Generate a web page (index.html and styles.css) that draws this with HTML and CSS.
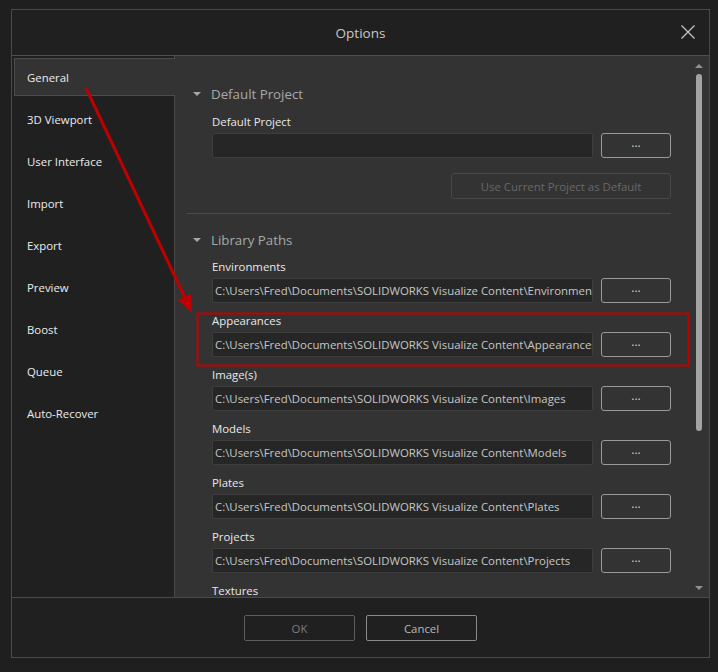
FILE: index.html
```html
<!DOCTYPE html>
<html lang="en">
<head>
    <meta charset="UTF-8">
    <title>Options</title>
    <link rel="stylesheet" href="styles.css">
</head>
<body>
<div class="dialog">
    <div class="titlebar">
        <div class="title">Options</div>
        <svg class="close" width="14" height="14" viewBox="0 0 14 14">
            <path d="M0.5 0.5 L13.5 13.5 M13.5 0.5 L0.5 13.5" stroke="#c8c8c8" stroke-width="1.2" fill="none"/>
        </svg>
    </div>

    <div class="main">
        <ul class="nav">
            <li class="active">General</li>
            <li>3D Viewport</li>
            <li>User Interface</li>
            <li>Import</li>
            <li>Export</li>
            <li>Preview</li>
            <li>Boost</li>
            <li>Queue</li>
            <li>Auto-Recover</li>
        </ul>

        <div class="content">
            <div class="scroller">
                <div class="section-head"><span class="caret"></span>Default Project</div>
                <div class="field">
                    <div class="label">Default Project</div>
                    <div class="row">
                        <div class="path"></div>
                        <button class="browse">...</button>
                    </div>
                </div>
                <div class="row-end">
                    <button class="wide" disabled>Use Current Project as Default</button>
                </div>

                <div class="divider"></div>

                <div class="section-head library"><span class="caret"></span>Library Paths</div>
                <div class="field">
                    <div class="label">Environments</div>
                    <div class="row">
                        <div class="path">C:\Users\Fred\Documents\SOLIDWORKS Visualize Content\Environments</div>
                        <button class="browse">...</button>
                    </div>
                </div>
                <div class="field">
                    <div class="label">Appearances</div>
                    <div class="row">
                        <div class="path">C:\Users\Fred\Documents\SOLIDWORKS Visualize Content\Appearances</div>
                        <button class="browse">...</button>
                    </div>
                </div>
                <div class="field">
                    <div class="label">Image(s)</div>
                    <div class="row">
                        <div class="path">C:\Users\Fred\Documents\SOLIDWORKS Visualize Content\Images</div>
                        <button class="browse">...</button>
                    </div>
                </div>
                <div class="field">
                    <div class="label">Models</div>
                    <div class="row">
                        <div class="path">C:\Users\Fred\Documents\SOLIDWORKS Visualize Content\Models</div>
                        <button class="browse">...</button>
                    </div>
                </div>
                <div class="field">
                    <div class="label">Plates</div>
                    <div class="row">
                        <div class="path">C:\Users\Fred\Documents\SOLIDWORKS Visualize Content\Plates</div>
                        <button class="browse">...</button>
                    </div>
                </div>
                <div class="field">
                    <div class="label">Projects</div>
                    <div class="row">
                        <div class="path">C:\Users\Fred\Documents\SOLIDWORKS Visualize Content\Projects</div>
                        <button class="browse">...</button>
                    </div>
                </div>
                <div class="field">
                    <div class="label">Textures</div>
                </div>
            </div>

            <div class="scrollbar">
                <span class="arrow-up"></span>
                <div class="thumb"></div>
                <span class="arrow-down"></span>
            </div>
        </div>
    </div>

    <div class="footer">
        <button class="btn btn-disabled">OK</button>
        <button class="btn">Cancel</button>
    </div>
</div>

<!-- annotation drawn over the screenshot -->
<svg class="annotations" width="718" height="672" viewBox="0 0 718 672">
    <line x1="86" y1="88" x2="185" y2="298" stroke="#c00000" stroke-width="3"/>
    <polygon points="192,313 178,300 191,294" fill="#c00000"/>
    <rect x="197.5" y="313.5" width="491" height="52" fill="none" stroke="#c00000" stroke-width="2"/>
</svg>
</body>
</html>
```

FILE: styles.css
```css
* {
    box-sizing: border-box;
}

body {
    margin: 0;
    padding: 9px 0 0 11px;
    background-color: #1f1f1f;
    font-family: 'Open Sans', 'Noto Sans', sans-serif;
    font-size: 11.4px;
    color: #e6e6e6;
    height: 672px;
    overflow: hidden;
    position: relative;
}

.dialog {
    width: 699px;
    height: 649px;
    border: 1px solid #4a4a4a;
    display: flex;
    flex-direction: column;
    background-color: #202020;
}

.titlebar {
    height: 46px;
    flex: none;
    border-bottom: 1px solid #505050;
    display: flex;
    align-items: center;
    justify-content: center;
    position: relative;
}

.title {
    font-size: 13.5px;
    color: #c8c8c8;
}

.close {
    position: absolute;
    right: 14px;
    top: 15px;
}

.main {
    flex: 1;
    display: flex;
    min-height: 0;
}

/* Menu lateral */
.nav {
    list-style: none;
    margin: 0;
    padding: 2px 0 0 2px;
    width: 163px;
    flex: none;
    border-right: 1px solid #484848;
}

.nav li {
    height: 38px;
    line-height: 38px;
    margin-bottom: 4px;
    padding-left: 12px;
    border: 1px solid transparent;
    color: #ececec;
}

.nav li.active {
    background-color: #333333;
    border-color: #4c4c4c;
    border-right: none;
    margin-right: -1px;
    position: relative;
}

.content {
    flex: 1;
    display: flex;
    background-color: #333333;
    min-width: 0;
}

.scroller {
    flex: 1;
    overflow: hidden;
    padding: 28px 0 0 37px;
}

.section-head {
    height: 20px;
    line-height: 20px;
    font-size: 13.3px;
    color: #a9a9a9;
    margin-left: -19px;
    display: flex;
    align-items: center;
}

.caret {
    width: 0;
    height: 0;
    border-left: 4px solid transparent;
    border-right: 4px solid transparent;
    border-top: 4px solid #a8a8a8;
    margin-right: 10px;
}

.section-head + .field {
    margin-top: 9px;
}

.section-head.library + .field {
    margin-top: 8px;
}

.field {
    width: 459px;
    margin-bottom: 9px;
}

.label {
    height: 17px;
    line-height: 17px;
    margin-bottom: 3px;
    color: #e8e8e8;
}

.row {
    display: flex;
    gap: 8px;
}

.path {
    width: 381px;
    height: 25px;
    line-height: 23px;
    padding-left: 2px;
    background-color: #262626;
    border: 1px solid #3e3e3e;
    border-radius: 2px;
    color: #c6c6c6;
    white-space: nowrap;
    overflow: hidden;
}

button {
    font-family: inherit;
    background: transparent;
    cursor: pointer;
}

.browse {
    width: 70px;
    height: 25px;
    border: 1px solid #9a9a9a;
    border-radius: 3px;
    color: #cfcfcf;
    font-size: 12px;
    line-height: 16px;
    padding: 0 0 6px;
}

.row-end {
    width: 459px;
    display: flex;
    justify-content: flex-end;
    margin-top: 15px;
}

.wide {
    width: 220px;
    height: 26px;
    border: 1px solid #474747;
    border-radius: 3px;
    color: #686868;
    font-size: 11.4px;
}

.divider {
    height: 1px;
    width: 484px;
    margin: 14px 0 16px -25px;
    background-color: #4c4c4c;
}

/* Barra de desplazamiento */
.scrollbar {
    width: 20px;
    flex: none;
    display: flex;
    flex-direction: column;
    padding: 8px 0 7px 6px;
}

.arrow-up, .arrow-down {
    width: 0;
    height: 0;
    border-left: 4px solid transparent;
    border-right: 4px solid transparent;
}

.arrow-up {
    border-bottom: 4px solid #909090;
}

.arrow-down {
    border-top: 4px solid #909090;
    margin-top: auto;
}

.thumb {
    width: 6px;
    height: 357px;
    margin: 6px 0 0 1px;
    border-radius: 3px;
    background-color: #a3a3a3;
}

.footer {
    height: 60px;
    flex: none;
    border-top: 1px solid #4a4a4a;
    padding: 17px 0 0 232px;
    display: flex;
    gap: 11px;
    align-items: flex-start;
}

.btn {
    width: 111px;
    height: 26px;
    border: 1px solid #8a8a8a;
    border-radius: 2px;
    color: #b8b8b8;
    font-size: 11.4px;
}

.btn-disabled {
    border-color: #5c5c5c;
    color: #7c7c7c;
}

.annotations {
    position: absolute;
    top: 0;
    left: 0;
    pointer-events: none;
}
```
